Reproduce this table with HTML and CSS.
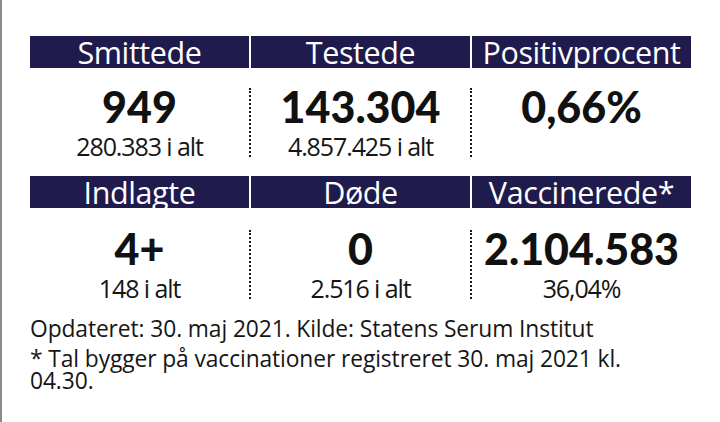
FILE: index.html
```html
<!DOCTYPE html>
<html lang="da">
<head>
<meta charset="utf-8">
<title>Corona-tal</title>
<link rel="stylesheet" href="styles.css">
</head>
<body>
<div class="page">
  <section class="panel">
    <div class="heads">
      <div class="head">Smittede</div>
      <div class="head">Testede</div>
      <div class="head">Positivprocent</div>
    </div>
    <div class="stats stats--first">
      <div class="stat"><div class="num">949</div><div class="sub">280.383 i alt</div></div>
      <div class="divider"></div>
      <div class="stat"><div class="num">143.304</div><div class="sub">4.857.425 i alt</div></div>
      <div class="divider"></div>
      <div class="stat"><div class="num">0,66%</div></div>
    </div>
    <div class="heads">
      <div class="head">Indlagte</div>
      <div class="head">Døde</div>
      <div class="head">Vaccinerede*</div>
    </div>
    <div class="stats stats--second">
      <div class="stat"><div class="num">4+</div><div class="sub">148 i alt</div></div>
      <div class="divider"></div>
      <div class="stat"><div class="num">0</div><div class="sub">2.516 i alt</div></div>
      <div class="divider"></div>
      <div class="stat"><div class="num">2.104.583</div><div class="sub">36,04%</div></div>
    </div>
    <div class="notes">
      <p class="note">Opdateret: 30. maj 2021. Kilde: Statens Serum Institut</p>
      <p class="note">* Tal bygger på vaccinationer registreret 30. maj 2021 kl. 04.30.</p>
    </div>
  </section>
</div>
</body>
</html>
```

FILE: styles.css
```css
html, body {
  margin: 0;
  padding: 0;
  background: #ffffff;
}

body {
  font-family: "Open Sans", "Noto Sans", "Liberation Sans", sans-serif;
  color: #161616;
}

.page {
  box-sizing: border-box;
  min-height: 422px;
  border-left: 2px solid #8c8c8c;
  padding: 36px 29px 0 28px;
}

.panel {
  width: 661px;
}

.heads {
  display: grid;
  grid-template-columns: 1fr 1fr 1fr;
  column-gap: 2px;
  height: 32px;
}

.head {
  background: #201b4d;
  color: #ffffff;
  text-align: center;
  font-size: 30.5px;
  line-height: 32px;
  letter-spacing: -0.4px;
  white-space: nowrap;
}

.stats {
  display: grid;
  grid-template-columns: 1fr 2px 1fr 2px 1fr;
  column-gap: 0;
  margin-bottom: 15px;
}

.stats--first {
  margin-top: 20px;
}

.stats--second {
  margin-top: 22px;
}

.divider {
  align-self: start;
  height: 69px;
  border-left: 2px dotted #1a1a1a;
}

.stat {
  text-align: center;
}

.num {
  margin-top: 1px;
  font-family: "Lato", "Open Sans", sans-serif;
  font-weight: 900;
  font-size: 43px;
  line-height: 36px;
  color: #111111;
}

.sub {
  margin-top: 6px;
  font-size: 25px;
  line-height: 30px;
  letter-spacing: -1.1px;
}

.notes {
  max-width: 650px;
}

.note {
  margin: 0;
  font-size: 22.8px;
  line-height: 22px;
  letter-spacing: -0.1px;
}

.note + .note {
  margin-top: 8px;
}
```
